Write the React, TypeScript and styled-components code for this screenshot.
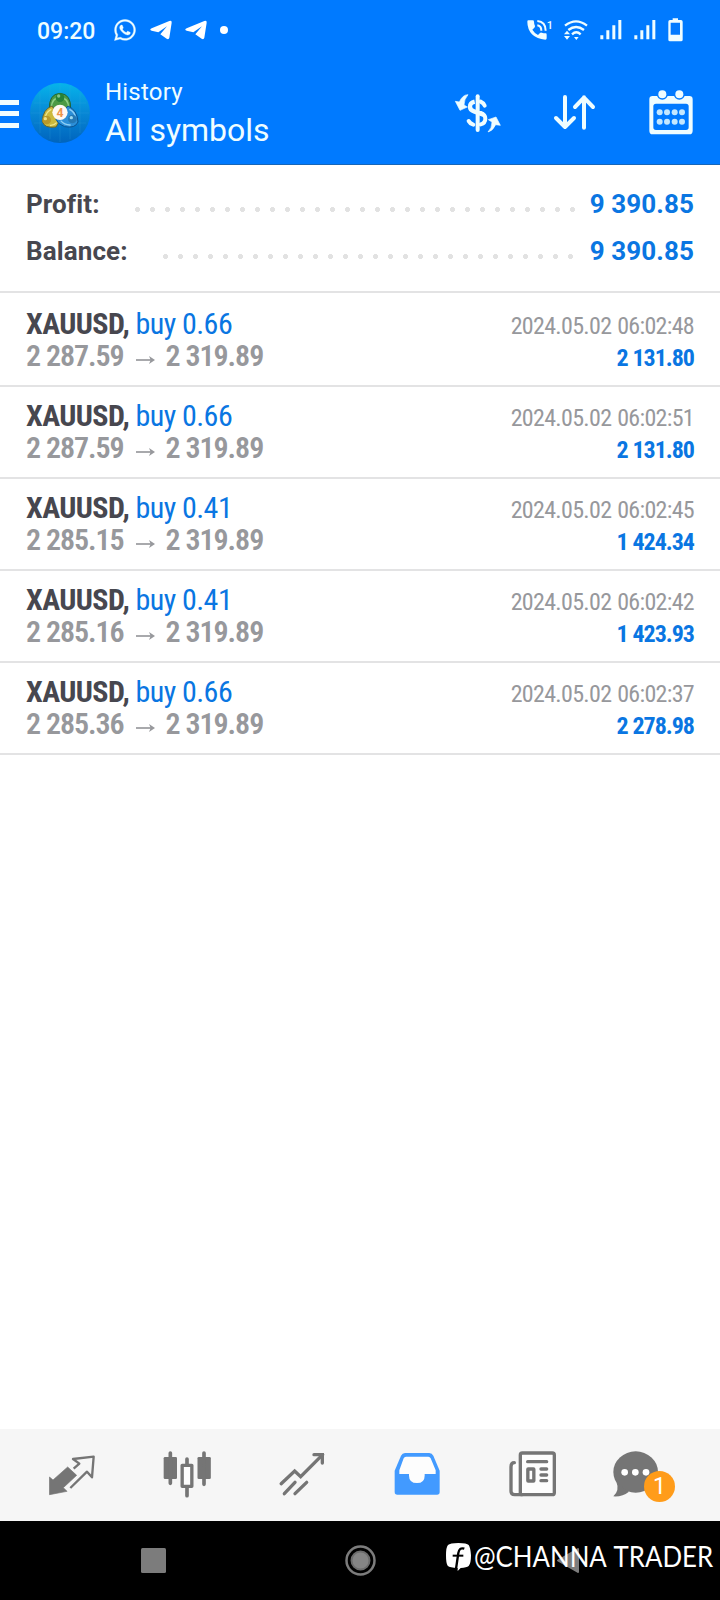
import React from "react";
import styled, { createGlobalStyle } from "styled-components";
import { FaWhatsapp } from "react-icons/fa";

const GlobalStyle = createGlobalStyle`
  * { box-sizing: border-box; }
  html, body { margin: 0; padding: 0; background: #fff; }
  body { font-family: Roboto, "Liberation Sans", sans-serif; }
  svg { display: block; flex: none; }
`;

const Screen = styled.div`
  width: 720px;
  height: 1600px;
  display: flex;
  flex-direction: column;
  background: #fff;
  overflow: hidden;
`;

const Top = styled.header`
  height: 165px;
  flex: none;
  background: #007aff;
  border-bottom: 1px solid #1766b8;
  color: #effdff;
`;

const StatusBar = styled.div`
  height: 60px;
  display: flex;
  align-items: center;
  padding: 0 37px 0 37px;
`;

const Clock = styled.span`
  font-size: 23px;
  font-weight: 500;
  line-height: 28px;
  width: 76px;
  padding-top: 4px;
`;

const StatusGroup = styled.div<{ $gap: number }>`
  display: flex;
  align-items: center;
  gap: ${(p) => p.$gap}px;
`;

const Spacer = styled.div`
  flex: 1;
`;

const CallIcon = styled.div`
  display: flex;
  align-items: flex-start;
  font-size: 11px;
  font-weight: 500;
  line-height: 11px;
  margin-right: -1px;
`;

const AppBar = styled.div`
  height: 104px;
  display: flex;
  align-items: center;
`;

const MenuLines = styled.div`
  width: 19px;
  height: 28px;
  margin-top: 3px;
  display: flex;
  flex-direction: column;
  justify-content: space-between;
`;

const MenuLine = styled.span`
  height: 5px;
  background: #effdff;
`;

const Logo = styled.svg`
  margin: 1px 0 0 11px;
`;

const Titles = styled.div`
  display: flex;
  flex-direction: column;
  margin: 5px 0 0 15px;
`;

const Title = styled.span`
  font-size: 24px;
  line-height: 30px;
  letter-spacing: 0.2px;
`;

const Subtitle = styled.span`
  font-size: 32px;
  line-height: 46px;
`;

const Actions = styled.div`
  display: flex;
  align-items: center;
  gap: 47px;
  margin: 1px 24px 0 auto;
`;

const Summary = styled.section`
  height: 126px;
  flex: none;
  padding: 15px 26px 0;
`;

const SummaryRow = styled.div`
  height: 47px;
  display: flex;
  align-items: center;
  font-size: 26px;
  font-weight: 700;
`;

const SummaryLabel = styled.span`
  color: #47474f;
  letter-spacing: 0.1px;
`;

const Leader = styled.span`
  flex: 1;
  height: 5px;
  margin: 12px 10px 0 30.5px;
  background: radial-gradient(circle at center, #e2e2e2 2.2px, transparent 2.8px) left center / 15px 5px repeat-x;
`;

const SummaryValue = styled.span`
  color: #0a76e2;
  letter-spacing: 0.1px;
`;

const Deals = styled.section`
  flex: 1;
  border-top: 2px solid #e3e3e4;
  padding-top: 2px;
`;

const Deal = styled.article`
  height: 92px;
  display: flex;
  justify-content: space-between;
  border-bottom: 2px solid #e3e3e4;
  padding: 13px 26px 0;
  font-stretch: 75%;
  font-family: "Roboto Condensed", Roboto, sans-serif;
`;

const DealColumn = styled.div<{ $end?: boolean }>`
  display: flex;
  flex-direction: column;
  align-items: ${(p) => (p.$end ? "flex-end" : "flex-start")};
  padding-top: ${(p) => (p.$end ? 2 : 0)}px;
  white-space: nowrap;
`;

const Symbol = styled.span`
  font-size: 30px;
  line-height: 32px;
  font-weight: 700;
  letter-spacing: -0.6px;
  color: #47474f;
`;

const Side = styled.span`
  font-weight: 400;
  letter-spacing: -0.55px;
  color: #0a76e2;
`;

const Prices = styled.span`
  display: flex;
  align-items: center;
  font-size: 30px;
  line-height: 32px;
  font-weight: 650;
  letter-spacing: -1.05px;
  word-spacing: 0px;
  color: #97989c;
`;

const ArrowIcon = styled.svg`
  margin: 7px 11px 0 12px;
`;

const Time = styled.span`
  font-size: 24px;
  line-height: 32px;
  letter-spacing: -0.68px;
  word-spacing: 1px;
  color: #97989c;
`;

const DealProfit = styled.span`
  font-size: 24px;
  line-height: 32px;
  font-weight: 700;
  letter-spacing: -1px;
  word-spacing: 0.2px;
  color: #0a76e2;
`;

const TabBar = styled.nav`
  height: 92px;
  flex: none;
  display: flex;
  padding: 0 14px;
  background: #f6f6f6;
`;

const Tab = styled.div`
  width: 115px;
  position: relative;
  display: flex;
  justify-content: center;
  padding-top: 21px;
`;

const Badge = styled.span`
  position: absolute;
  left: 55px;
  top: 42px;
  width: 31px;
  height: 31px;
  border-radius: 50%;
  background: #ff9c1a;
  color: #fff;
  font-size: 23px;
  line-height: 32px;
  text-align: center;
`;

const SystemBar = styled.footer`
  height: 79px;
  flex: none;
  position: relative;
  display: flex;
  align-items: center;
  justify-content: space-between;
  padding: 0 137px 2px;
  background: #000;
`;

const Watermark = styled.div`
  position: absolute;
  left: 446px;
  top: 16px;
  height: 40px;
  display: flex;
  align-items: center;
  gap: 3px;
  color: #fff;
  font-family: Lato, sans-serif;
  font-size: 28.5px;
  white-space: nowrap;
`;

const WatermarkText = styled.span`
  transform: scaleX(0.905);
  transform-origin: left center;
  word-spacing: 2px;
  margin-top: -2px;
`;

const Phone = () => (
  <svg width="20" height="20" viewBox="0 0 60 60">
    <path d="M4 1H17Q21 1 21 5Q21 12 24 18Q24 21 22 23L16 29Q23 40 33 45L39 39Q41 37 44 38Q50 40 56 40Q59 40 59 44V55Q59 59 55 59Q30 58 15 43Q1 27 1 5Q1 1 4 1Z" fill="#effdff" />
    <path d="M31 3Q56 5 56 32M31 16Q43 18 43 32" fill="none" stroke="#effdff" strokeWidth="6" />
  </svg>
);

const Plane = () => (
  <svg width="22" height="20" viewBox="0 0 66 60">
    <path d="M1 30Q0 27 5 25L58 3Q66 0 65 8L58 53Q56 60 50 56L31 43L51 19L25 37L5 32Z" fill="#fff" />
  </svg>
);

const Signal = () => (
  <svg width="22" height="20" viewBox="0 0 66 60" fill="#effdff">
    <path d="M1 46h9v12h-9zM19 31h9v27h-9zM37 16h9v42h-9zM55 0h9v58h-9z" />
  </svg>
);

const Wifi = () => (
  <svg width="24" height="21" viewBox="0 0 72 63">
    <g fill="none" stroke="#effdff" strokeWidth="7">
      <path d="M3 17Q36 -9 69 17" />
      <path d="M13 30Q36 12 60 30" />
      <path d="M24 43Q37 31 50 43" />
    </g>
    <path d="M30 51h14L37 60ZM0 43L9 32L18 43ZM0 48H18L9 59Z" fill="#effdff" />
  </svg>
);

const Battery = () => (
  <svg width="15" height="24" viewBox="0 0 45 72">
    <path fillRule="evenodd" d="M14 1h16v5h9q5 0 5 5v54q0 5-5 5H6q-5 0-5-5V11q0-5 5-5h8ZM8 14v36h28V14Z" fill="#effdff" />
  </svg>
);

const LogoIcon = () => (
  <Logo width="60" height="62" viewBox="0 0 180 186">
    <defs>
      <linearGradient id="sky" x1="0" y1="0" x2="0" y2="1">
        <stop offset="0" stopColor="#06b4ea" />
        <stop offset=".5" stopColor="#0787d5" />
        <stop offset="1" stopColor="#0064bd" />
      </linearGradient>
    </defs>
    <circle cx="90" cy="93" r="90" fill="url(#sky)" />
    <path d="M12 63H168M2 93H178M12 123H168M30 33V153M60 12V172M90 5V180M120 12V172M150 33V153" stroke="#42aadb" strokeOpacity=".3" strokeWidth="2" />
    <path d="M58 82Q56 36 90 34Q124 36 122 82L104 92H76Z" fill="#4c9a45" stroke="#1f6338" strokeWidth="3" />
    <path d="M64 76Q66 48 90 45Q114 48 116 76" fill="none" stroke="#8fcf86" strokeWidth="4" />
    <path d="M66 72Q38 82 37 118Q42 140 78 135L92 112Z" fill="#cbb93c" stroke="#67662c" strokeWidth="3" />
    <path d="M64 82Q47 90 46 108M60 130Q72 131 80 122" fill="none" stroke="#efe58a" strokeWidth="4" />
    <path d="M114 72Q142 84 144 120Q136 140 104 134Q82 126 78 112Z" fill="#2c8fd8" stroke="#0b5390" strokeWidth="3" />
    <path d="M118 82Q134 90 136 104M122 129Q104 130 92 116" fill="none" stroke="#8fd0f5" strokeWidth="4" />
    <circle cx="90" cy="47" r="13" fill="#268238" />
    <circle cx="86" cy="42" r="5" fill="#84c48b" />
    <circle cx="50" cy="114" r="13" fill="#b8992a" />
    <circle cx="46" cy="110" r="5" fill="#eee184" />
    <circle cx="127" cy="111" r="13" fill="#2378b5" />
    <circle cx="124" cy="107" r="5" fill="#9cd8ee" />
    <circle cx="90" cy="91" r="23" fill="#fff9f3" />
    <text x="90" y="104" textAnchor="middle" fontFamily="Roboto" fontSize="37" fontWeight="700" fill="#ed944b">4</text>
  </Logo>
);

const DollarIcon = () => (
  <svg width="50" height="50" viewBox="0 0 150 150" fill="none" stroke="#effdff">
    <path d="M77 25V126" strokeWidth="12" strokeLinecap="round" />
    <path d="M86 41Q95 45 98 53M86 75Q100 80 100 92Q100 105 86 109M50 99Q54 107 64 110" strokeWidth="12" strokeLinecap="round" />
    <path d="M68 41Q54 44 54 56Q54 66 66 70L94 80" strokeWidth="13" />
    <path d="M48 20Q32 20 22 42L10 40L24 67L46 57L36 51Q36 34 48 20Z" fill="#effdff" strokeWidth="2" strokeLinejoin="round" />
    <path d="M108 132Q122 129 131 110L145 112L132 87L109 95L120 102Q120 120 108 132Z" fill="#effdff" strokeWidth="2" strokeLinejoin="round" />
  </svg>
);

const SortIcon = () => (
  <svg width="50" height="50" viewBox="0 0 150 150" fill="none" stroke="#effdff" strokeWidth="12" strokeLinecap="round" strokeLinejoin="round">
    <path d="M48 27V117M21 90L48 117L75 90M105 119V28M78 57L105 29L132 57" />
  </svg>
);

const CalendarIcon = () => (
  <svg width="50" height="50" viewBox="0 0 150 150">
    <path fillRule="evenodd" d="M20 24H130Q140 24 140 34V128Q140 139 130 139H20Q10 139 10 128V34Q10 24 20 24ZM30 47Q22 47 22 55V118Q22 126 30 126H120Q128 126 128 118V55Q128 47 120 47Z" fill="#effdff" />
    <circle cx="49" cy="18" r="17" fill="#007aff" />
    <circle cx="100" cy="18" r="17" fill="#007aff" />
    <circle cx="49" cy="19" r="12" fill="#effdff" />
    <circle cx="100" cy="19" r="12" fill="#effdff" />
    {[41, 63, 86, 108].map((x) => (
      <g key={x} fill="#c4e8ff">
        <circle cx={x} cy="73" r="9" />
        <circle cx={x} cy="101" r="9" />
      </g>
    ))}
  </svg>
);

const grey = "#757575";

const QuotesIcon = () => (
  <svg width="50" height="50" viewBox="0 0 150 150">
    <path d="M7.500 81L18 90L62 51L89 76L49 113L60 124L7.500 134Z" fill={grey} stroke={grey} strokeWidth="2" strokeLinejoin="round" />
    <path d="M80 56L97 41L78 27L140 20L135 82L120 65L70 114" fill="none" stroke={grey} strokeWidth="7" strokeLinejoin="round" />
  </svg>
);

const ChartIcon = () => (
  <svg width="50" height="50" viewBox="0 0 150 150" fill={grey}>
    <rect x="5" y="21" width="40" height="66" rx="4" />
    <rect x="106.500" y="21" width="40" height="66" rx="4" />
    <rect x="60.500" y="46" width="29" height="63" fill="#fdfdfd" stroke={grey} strokeWidth="10" strokeLinejoin="round" />
    <path d="M25 9V100M126 9V103M75 27V44M75 114V137" stroke={grey} strokeWidth="11" strokeLinecap="round" />
  </svg>
);

const TradeIcon = () => (
  <svg width="50" height="50" viewBox="0 0 150 150" fill="none" stroke={grey} strokeWidth="10" strokeLinecap="round">
    <path d="M12.500 101L53 63L71 80L137 14" />
    <path d="M111 14H136V39M22 131L54 97M54 131L89 97" />
  </svg>
);

const InboxIcon = () => (
  <svg width="50" height="50" viewBox="0 0 150 150">
    <path d="M39 9H112Q120 9 124 17L143 62V126Q143 134 135 134H16Q8 134 8 126V62L27 17Q31 9 39 9Z" fill="#429aff" />
    <path d="M42 20H109Q114 20 116 25L131 61V72H98V77Q98 99 75 99Q51 99 51 77V72H22V61L35 25Q37 20 42 20Z" fill="#fdfdfd" />
  </svg>
);

const NewsIcon = () => (
  <svg width="50" height="50" viewBox="0 0 150 150" fill="none" stroke={grey} strokeWidth="10" strokeLinecap="round">
    <path d="M22 38Q12 38 12 50V124Q12 134 23 134H45L40 40H22" fill="#fdfdfd" stroke="none" />
    <path d="M22 38Q12 38 12 50V124Q12 134 23 134H45" />
    <rect x="40" y="9" width="102" height="125" rx="6" fill="#fdfdfd" />
    <path d="M62 35H119M102 57H119M102 75H119M102 92H119" />
    <rect x="62.500" y="57" width="18" height="36" rx="1" />
  </svg>
);

const ChatIcon = () => (
  <svg width="70" height="50" viewBox="0 0 210 150" fill={grey}>
    <ellipse cx="71" cy="66" rx="67" ry="62" />
    <path d="M14 98Q23 121 4 139Q31 141 51 125Z" />
    {[38, 70, 102].map((x) => (
      <circle key={x} cx={x} cy="67" r="10" fill="#fff" />
    ))}
  </svg>
);

const deals = [
  { lot: "0.66", open: "2 287.59", time: "2024.05.02 06:02:48", profit: "2 131.80" },
  { lot: "0.66", open: "2 287.59", time: "2024.05.02 06:02:51", profit: "2 131.80" },
  { lot: "0.41", open: "2 285.15", time: "2024.05.02 06:02:45", profit: "1 424.34" },
  { lot: "0.41", open: "2 285.16", time: "2024.05.02 06:02:42", profit: "1 423.93" },
  { lot: "0.66", open: "2 285.36", time: "2024.05.02 06:02:37", profit: "2 278.98" },
];

export default function App() {
  return (
    <Screen>
      <GlobalStyle />
      <Top>
        <StatusBar>
          <Clock>09:20</Clock>
          <StatusGroup $gap={13}>
            <FaWhatsapp size={24} stroke="#effdff" strokeWidth={8} />
            <Plane />
            <Plane />
            <svg width="8" height="8" viewBox="0 0 8 8">
              <circle cx="4" cy="4" r="4" fill="#fff" />
            </svg>
          </StatusGroup>
          <Spacer />
          <StatusGroup $gap={12}>
            <CallIcon>
              <Phone />1
            </CallIcon>
            <Wifi />
            <Signal />
            <Signal />
            <Battery />
          </StatusGroup>
        </StatusBar>
        <AppBar>
          <MenuLines>
            <MenuLine />
            <MenuLine />
            <MenuLine />
          </MenuLines>
          <LogoIcon />
          <Titles>
            <Title>History</Title>
            <Subtitle>All symbols</Subtitle>
          </Titles>
          <Actions>
            <DollarIcon />
            <SortIcon />
            <CalendarIcon />
          </Actions>
        </AppBar>
      </Top>
      <Summary>
        {["Profit:", "Balance:"].map((label) => (
          <SummaryRow key={label}>
            <SummaryLabel>{label}</SummaryLabel>
            <Leader />
            <SummaryValue>9 390.85</SummaryValue>
          </SummaryRow>
        ))}
      </Summary>
      <Deals>
        {deals.map((d) => (
          <Deal key={d.time}>
            <DealColumn>
              <Symbol>
                XAUUSD, <Side>buy {d.lot}</Side>
              </Symbol>
              <Prices>
                {d.open}
                <ArrowIcon width="19" height="10" viewBox="0 0 57 30">
                  <path d="M0 15H46" stroke="#97989c" strokeWidth="5" />
                  <path d="M39 3L57 15L39 27L44 15Z" fill="#97989c" />
                </ArrowIcon>
                2 319.89
              </Prices>
            </DealColumn>
            <DealColumn $end>
              <Time>{d.time}</Time>
              <DealProfit>{d.profit}</DealProfit>
            </DealColumn>
          </Deal>
        ))}
      </Deals>
      <TabBar>
        <Tab><QuotesIcon /></Tab>
        <Tab><ChartIcon /></Tab>
        <Tab><TradeIcon /></Tab>
        <Tab><InboxIcon /></Tab>
        <Tab><NewsIcon /></Tab>
        <Tab>
          <ChatIcon />
          <Badge>1</Badge>
        </Tab>
      </TabBar>
      <SystemBar>
        <svg width="32" height="32" viewBox="0 0 32 32">
          <rect x="4" y="4" width="25" height="25" rx="1.500" fill="#7c7c7c" />
        </svg>
        <svg width="32" height="32" viewBox="0 0 32 32">
          <circle cx="16.500" cy="16.500" r="14" fill="none" stroke="#7c7c7c" strokeWidth="2.500" />
          <circle cx="16.500" cy="16.500" r="9" fill="#858585" stroke="#6c6c6c" strokeWidth="2" />
        </svg>
        <svg width="32" height="32" viewBox="0 0 32 32">
          <path d="M7 16.500L27 5V28Z" fill="#7c7c7c" stroke="#7c7c7c" strokeWidth="2" strokeLinejoin="round" />
        </svg>
        <Watermark>
          <svg width="25" height="28" viewBox="0 0 75 84">
            <path d="M37 0Q63 0 68 6T75 37Q75 62 68 69Q62 74 44 75L35 84V75Q11 74 5 68Q0 62 0 37T6 6Q12 0 37 0Z" fill="#fff" />
            <path d="M55 17Q40 12 37 30L30 78" fill="none" stroke="#000" strokeWidth="7" />
            <path d="M20 38H52" stroke="#000" strokeWidth="6" />
          </svg>
          <WatermarkText>@CHANNA TRADER</WatermarkText>
        </Watermark>
      </SystemBar>
    </Screen>
  );
}
